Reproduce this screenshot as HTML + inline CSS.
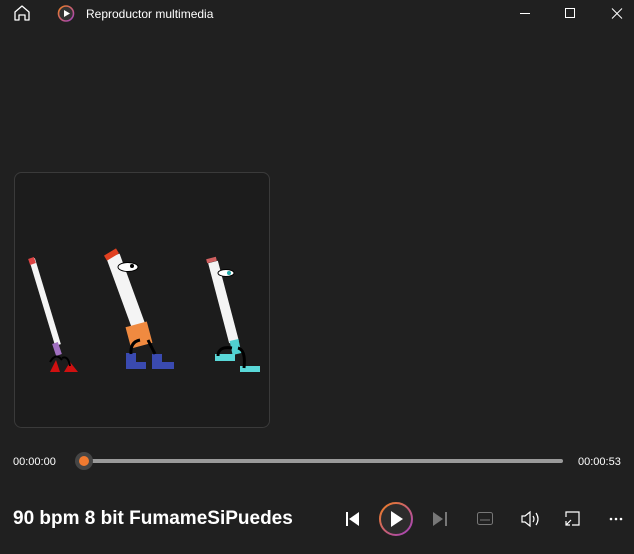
<!DOCTYPE html>
<html><head><style>
body{margin:0;width:634px;height:554px;background:#202020;font-family:"Liberation Sans",sans-serif;color:#fff;overflow:hidden;position:relative}
.t{position:absolute}
</style></head><body>
<svg class="t" style="left:0;top:0" width="634" height="554">
<defs><linearGradient id="g" x1="0" y1="0" x2="1" y2="1"><stop offset="0" stop-color="#f08020"/><stop offset="1" stop-color="#a040c0"/></linearGradient></defs>
<path d="M15 12 L22 6 L29 12 V20 H25 V15 H19 V20 H15 Z" fill="none" stroke="#fff" stroke-width="1.3" stroke-linejoin="round"/>
<circle cx="66" cy="13.5" r="7.5" fill="#333" stroke="url(#g)" stroke-width="1.6"/>
<path d="M64 10 L70 13.5 L64 17 Z" fill="#fff"/>
<line x1="520" y1="13.5" x2="530" y2="13.5" stroke="#fff" stroke-width="1"/>
<rect x="565.5" y="8.5" width="9" height="9" fill="none" stroke="#fff" stroke-width="1"/>
<path d="M612 8.5 L622 18.5 M622 8.5 L612 18.5" stroke="#fff" stroke-width="1"/>
<rect x="14.5" y="172.5" width="255" height="255" rx="7" fill="#1c1c1c" stroke="#3a3a3a"/>
<line x1="32" y1="259" x2="58" y2="345" stroke="#f4f4f4" stroke-width="6"/>
<line x1="31" y1="258" x2="33" y2="264" stroke="#d44" stroke-width="6"/>
<line x1="55" y1="343" x2="59" y2="355" stroke="#a070c0" stroke-width="6"/>
<path d="M50 372 L56 360 L60 372 Z M64 372 L70 362 L78 372 Z" fill="#d01010"/>
<path d="M50 362 Q56 352 62 360 M62 358 Q68 355 70 366" stroke="#000" stroke-width="2" fill="none"/>
<line x1="113" y1="256" x2="140" y2="330" stroke="#f4f4f4" stroke-width="14"/>
<line x1="110" y1="252" x2="113" y2="257" stroke="#e04020" stroke-width="14"/>
<rect x="128" y="324" width="22" height="22" fill="#f08a40" transform="rotate(-15 139 335)"/>
<rect x="126" y="353" width="10" height="15" fill="#3a4ab0"/><rect x="126" y="362" width="20" height="7" fill="#3a4ab0"/>
<rect x="152" y="354" width="10" height="14" fill="#3a4ab0"/><rect x="152" y="362" width="22" height="7" fill="#3a4ab0"/>
<path d="M131 354 Q130 342 140 340 M148 340 L155 354" stroke="#000" stroke-width="3" fill="none"/>
<ellipse cx="128" cy="267" rx="10" ry="4.5" fill="#fff" stroke="#000"/><circle cx="132" cy="266" r="2" fill="#000"/>
<line x1="213" y1="262" x2="234" y2="342" stroke="#f4f4f4" stroke-width="10"/>
<line x1="211" y1="258" x2="212" y2="262" stroke="#d06060" stroke-width="10"/>
<line x1="234" y1="340" x2="237" y2="354" stroke="#50d0d0" stroke-width="9"/>
<rect x="215" y="354" width="20" height="7" fill="#5ad8d8"/><rect x="240" y="366" width="20" height="6" fill="#5ad8d8"/>
<path d="M218 356 Q218 346 232 348 M238 348 Q246 350 244 368" stroke="#000" stroke-width="3" fill="none"/>
<ellipse cx="226" cy="273" rx="8" ry="3.5" fill="#fff" stroke="#000"/><circle cx="229" cy="273" r="2" fill="#2aa"/>
<line x1="84" y1="461" x2="561" y2="461" stroke="#9a9a9a" stroke-width="4" stroke-linecap="round"/>
<circle cx="84" cy="461" r="9" fill="#454545"/>
<circle cx="84" cy="461" r="5" fill="#f07a30"/>
<rect x="346" y="512" width="2" height="14" fill="#fff"/>
<path d="M359 512 V526 L349 519 Z" fill="#fff"/>
<circle cx="396" cy="519" r="16" fill="#2c2c2c" stroke="url(#g)" stroke-width="2"/>
<path d="M391 511 L403 519 L391 527 Z" fill="#fff"/>
<path d="M433 512 L443 519 L433 526 Z" fill="#777"/>
<rect x="445" y="512" width="2" height="14" fill="#777"/>
<rect x="477.5" y="512.5" width="15" height="12" rx="2" fill="none" stroke="#777"/>
<line x1="480" y1="520" x2="490" y2="520" stroke="#777"/>
<path d="M522 516 H525 L530 512 V526 L525 522 H522 Z" fill="none" stroke="#fff" stroke-width="1.2"/>
<path d="M533 516 Q535 519 533 522 M536 513 Q540 519 536 525" fill="none" stroke="#fff" stroke-width="1.2"/>
<path d="M566 517 V512 H579 V525 H572 M571 520 L566 525 M566 521 V525 H570" fill="none" stroke="#fff" stroke-width="1.2"/>
<circle cx="611" cy="519" r="1.3" fill="#fff"/><circle cx="616" cy="519" r="1.3" fill="#fff"/><circle cx="621" cy="519" r="1.3" fill="#fff"/>
</svg>
<div class="t" style="left:86px;top:7px;font-size:12px">Reproductor multimedia</div>
<div class="t" style="left:13px;top:456px;font-size:11px">00:00:00</div>
<div class="t" style="left:578px;top:456px;font-size:11px">00:00:53</div>
<div class="t" style="left:13px;top:508px;font-size:19px;font-weight:bold">90 bpm 8 bit FumameSiPuedes</div>
</body></html>
